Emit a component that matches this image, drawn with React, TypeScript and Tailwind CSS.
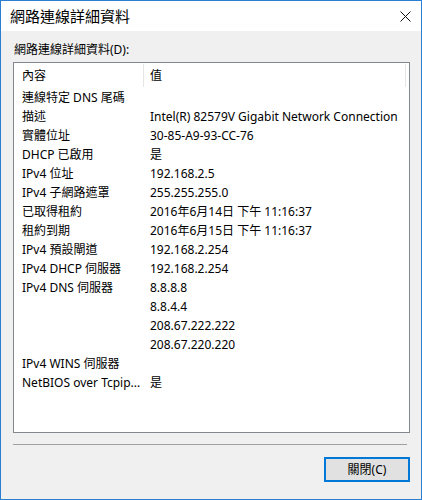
import React from "react";

type Row = { name: string; value: string };

const rows: Row[] = [
  { name: "連線特定 DNS 尾碼", value: "" },
  { name: "描述", value: "Intel(R) 82579V Gigabit Network Connection" },
  { name: "實體位址", value: "30-85-A9-93-CC-76" },
  { name: "DHCP 已啟用", value: "是" },
  { name: "IPv4 位址", value: "192.168.2.5" },
  { name: "IPv4 子網路遮罩", value: "255.255.255.0" },
  { name: "已取得租約", value: "2016年6月14日 下午 11:16:37" },
  { name: "租約到期", value: "2016年6月15日 下午 11:16:37" },
  { name: "IPv4 預設閘道", value: "192.168.2.254" },
  { name: "IPv4 DHCP 伺服器", value: "192.168.2.254" },
  { name: "IPv4 DNS 伺服器", value: "8.8.8.8" },
  { name: "", value: "8.8.4.4" },
  { name: "", value: "208.67.222.222" },
  { name: "", value: "208.67.220.220" },
  { name: "IPv4 WINS 伺服器", value: "" },
  { name: "NetBIOS over Tcpip...", value: "是" },
];

export default function App() {
  return (
    <div className="w-[422px] h-[500px] flex flex-col border border-[#2b7fd0] bg-[#f0f0f0] text-black font-['Noto_Sans','Noto_Sans_CJK_TC',sans-serif]">
      {/* title bar */}
      <div className="h-[30px] shrink-0 bg-white flex items-center justify-between pl-[9px] pr-[10px]">
        <span className="text-[15px] leading-none">網路連線詳細資料</span>
        <svg width="11" height="11" viewBox="0 0 11 11" className="mt-[1px]">
          <path d="M0.5 0.5 L10.5 10.5 M10.5 0.5 L0.5 10.5" stroke="#111" strokeWidth="1" />
        </svg>
      </div>

      <div className="flex flex-col flex-1 px-[12px]">
        <div className="mt-[11px] h-[16px] text-[12px] leading-[16px] pl-px">網路連線詳細資料(D):</div>

        {/* list view */}
        <div className="mt-[4px] w-[397px] h-[371px] border border-[#828790] bg-white text-[12px]">
          <div className="flex h-[25px] items-center">
            <div className="w-[129px] pl-[8px]">內容</div>
            <div className="w-px h-[23px] bg-[#e5e5e5]" />
            <div className="flex-1 pl-[6px]">值</div>
            <div className="w-px h-[23px] bg-[#e5e5e5] mr-[3px]" />
          </div>
          {rows.map((row, i) => (
            <div key={i} className="flex h-[19px] items-center whitespace-nowrap">
              <div className="w-[136px] pl-[8px]">{row.name}</div>
              <div className="flex-1">{row.value}</div>
            </div>
          ))}
        </div>

        <div className="mt-[11px] w-[394px] h-px bg-[#a0a0a0]" />

        <div className="mt-[12px] flex justify-end w-[397px]">
          <button
            type="button"
            className="w-[86px] h-[25px] border-2 border-[#0078d7] bg-[#e1e1e1] text-[12px] leading-none"
          >
            關閉(C)
          </button>
        </div>
      </div>
    </div>
  );
}
